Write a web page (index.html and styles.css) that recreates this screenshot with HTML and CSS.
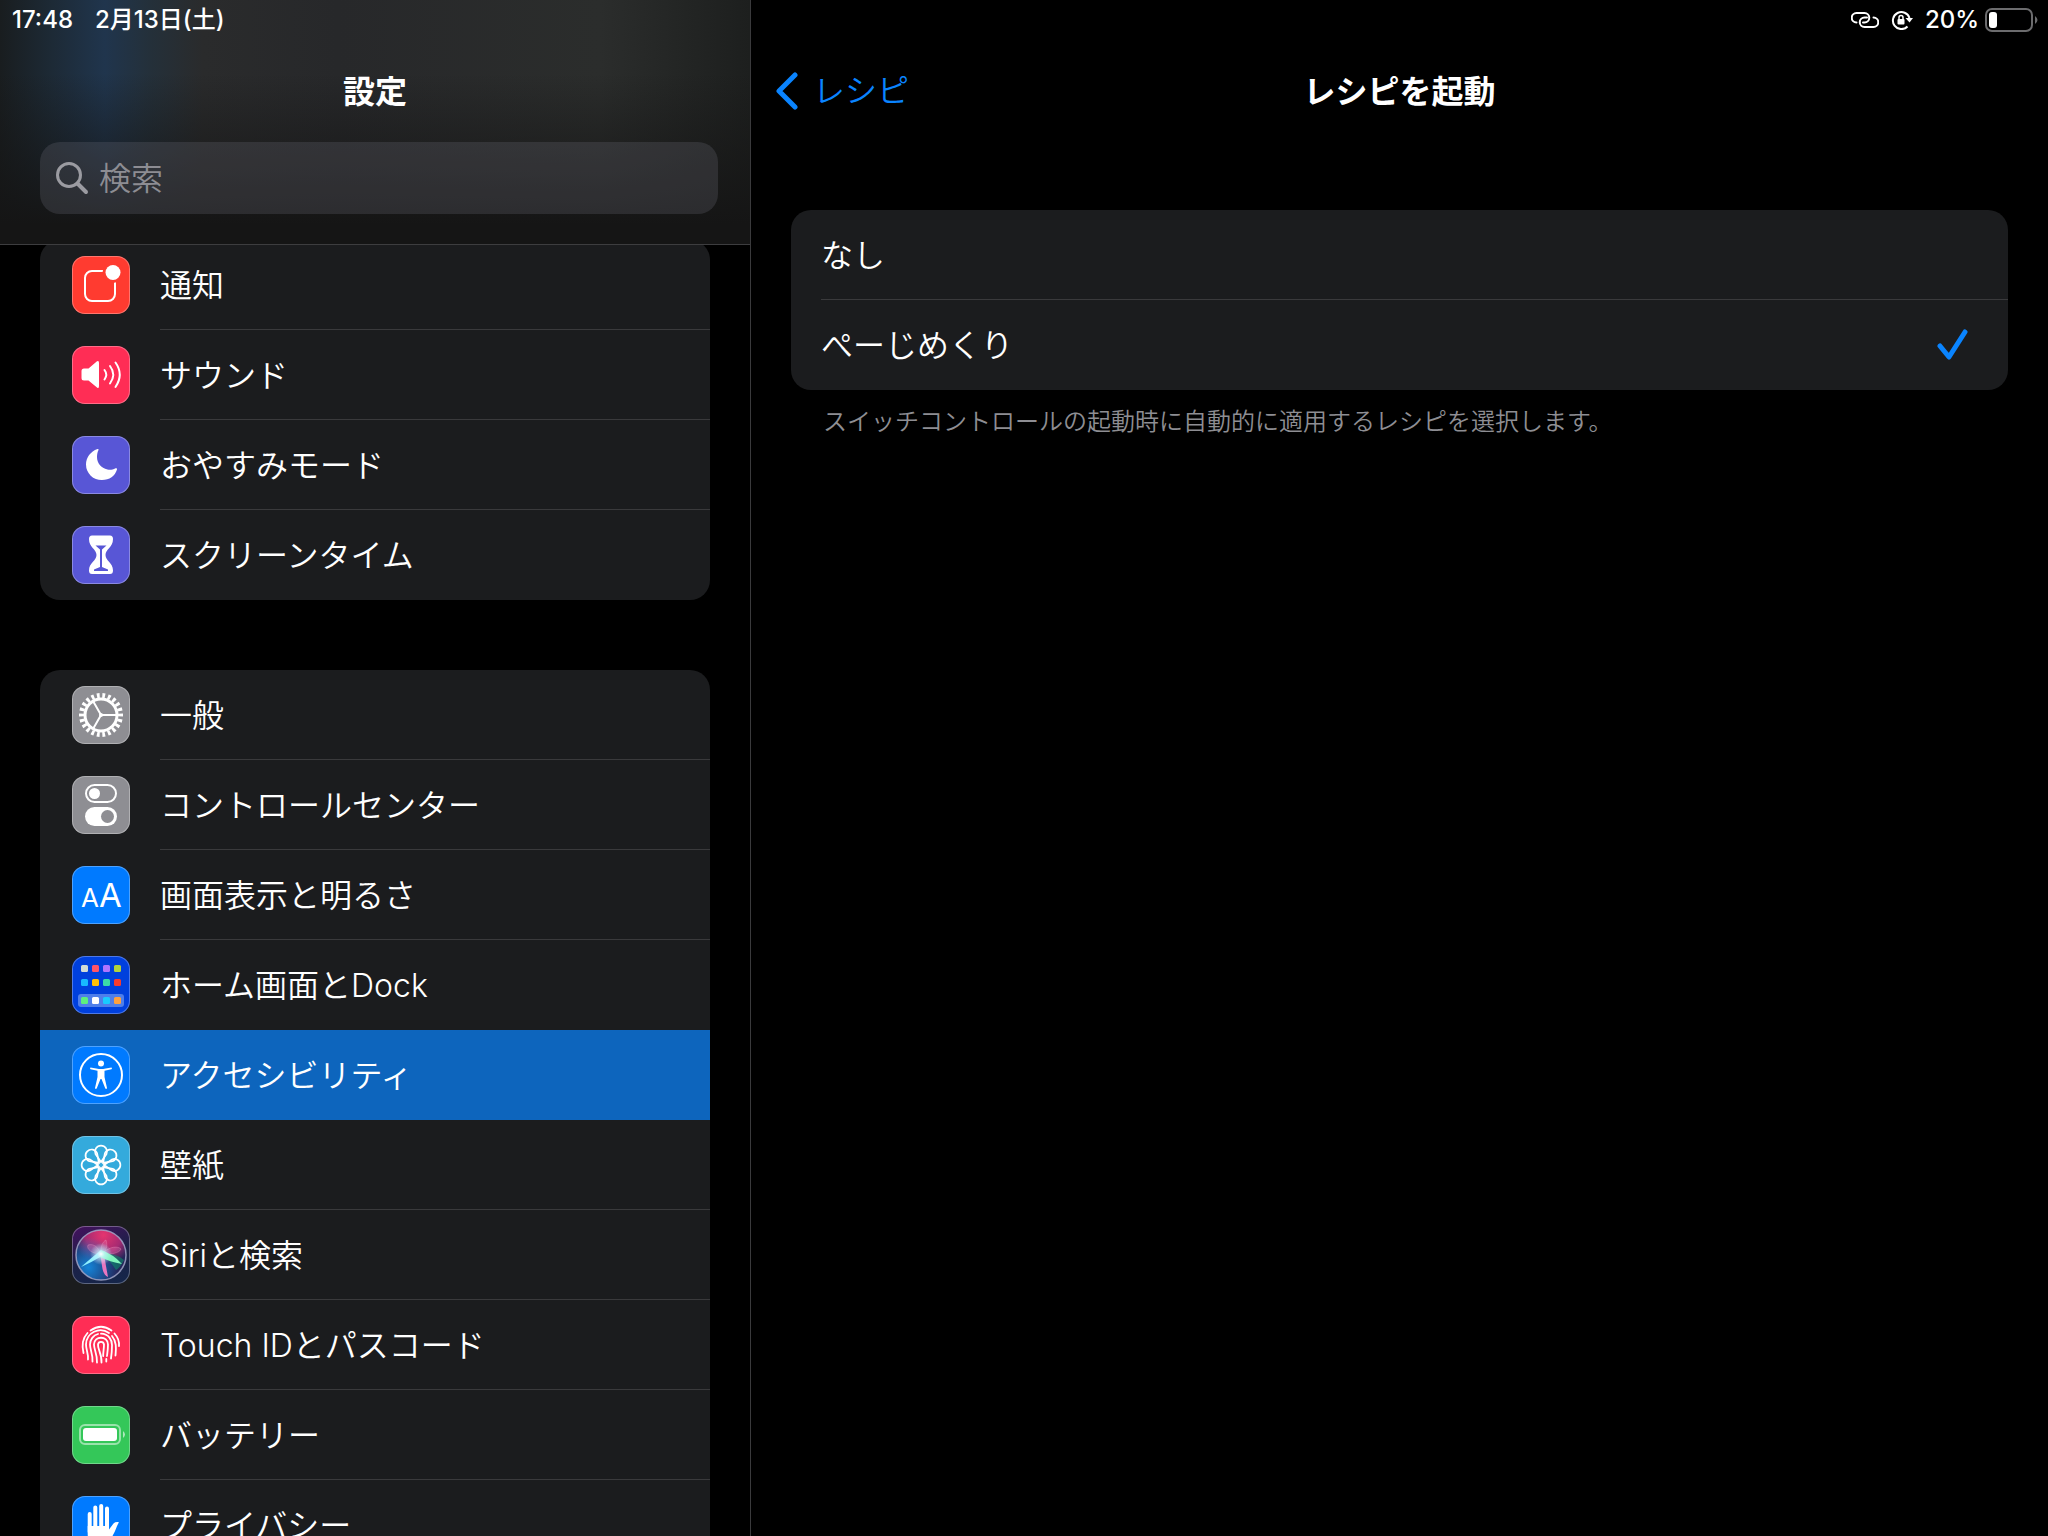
FILE: index.html
```html
<!DOCTYPE html>
<html lang="ja">

<head>
  <meta charset="UTF-8">
  <meta name="viewport" content="width=device-width, initial-scale=1.0">
  <title>設定</title>
  <link rel="stylesheet" href="styles.css">
</head>

<body>
  <div class="app">
    <aside class="sidebar">
      <header class="sidebar-header">
        <div class="status">
          <span>17:48</span>
          <span>2月13日(土)</span>
        </div>
        <h1 class="title">設定</h1>
        <label class="search">
          <svg width="34" height="34" viewBox="0 0 34 34" fill="none" stroke="#9b9ba1" stroke-width="3" stroke-linecap="round" aria-hidden="true">
            <circle cx="14" cy="14" r="11.5" />
            <path d="M22.5 22.5L31 31" stroke-width="4" />
          </svg>
          <input type="search" placeholder="検索" aria-label="検索">
        </label>
      </header>

      <nav class="menu">
        <ul class="group">
          <li><a class="item" href="#">
            <svg class="icon red" viewBox="0 0 58 58" aria-hidden="true">
              <rect x="13" y="15" width="30" height="30" rx="7" fill="none" stroke="#fff" stroke-width="2" />
              <circle cx="41" cy="16.500" r="10.500" fill="#ff3b30" />
              <circle cx="41" cy="16.500" r="7.500" fill="#fff" />
            </svg>
            <span class="label">通知</span>
          </a></li>
          <li><a class="item" href="#">
            <svg class="icon pink" viewBox="0 0 58 58" aria-hidden="true">
              <path d="M12 22.500H16.500L25 15.300Q27 14.200 27 17V40Q27 43 25 41.500L16.500 34.500H12Q9.500 34.500 9.500 32V25Q9.500 22.500 12 22.500Z" fill="#fff" />
              <g fill="none" stroke="#fff" stroke-width="2" stroke-linecap="round">
                <path d="M32.500 24Q36 28.500 32.500 33.500" />
                <path d="M38 20Q44.500 28.500 38 37.500" />
                <path d="M43.500 16.500Q52 28.500 43.500 41" />
              </g>
            </svg>
            <span class="label">サウンド</span>
          </a></li>
          <li><a class="item" href="#">
            <svg class="icon purple" viewBox="0 0 58 58" aria-hidden="true">
              <path d="M25.500 13C18.500 15.500 14 21.500 14 28.500A15.500 15.500 0 0 0 30 44C37.500 44 43 40 45 33.500C45.200 32.300 44.300 31.900 43.500 32.300C40.500 34 37.500 34 35.500 33.500C29 32 25 27 25 21C25 18 25.500 16 26.500 14Q26.800 12.500 25.500 13Z" fill="#fff" />
            </svg>
            <span class="label">おやすみモード</span>
          </a></li>
          <li><a class="item" href="#">
            <svg class="icon purple" viewBox="0 0 58 58" aria-hidden="true">
              <path d="M20 9.500H38Q41 9.500 41 13C41 21.500 33.500 23 33.500 29C33.500 35 41 36.500 41 44.500Q41 48 38 48H20Q17 48 17 44.500C17 36.500 24.500 35 24.500 29C24.500 23 17 21.500 17 13Q17 9.500 20 9.500Z" fill="#fff" />
              <path d="M23.500 19.500H34.500L30 23.500V41L36 43.500V45H22V43.500L28 41V23.500Z" fill="#5856d6" />
            </svg>
            <span class="label">スクリーンタイム</span>
          </a></li>
        </ul>

        <ul class="group">
          <li><a class="item" href="#">
            <svg class="icon gray" viewBox="0 0 58 58" aria-hidden="true">
              <g fill="none" stroke="#fff">
                <circle cx="29" cy="29" r="19.500" stroke-width="5" pathLength="44" stroke-dasharray="1 1" stroke-dashoffset="0.500" />
                <circle cx="29" cy="29" r="16" stroke-width="3" />
                <path d="M29 29H45M29 29L21 15M29 29L21 43" stroke-width="2" />
              </g>
              <circle cx="29" cy="29" r="2" fill="#fff" />
            </svg>
            <span class="label">一般</span>
          </a></li>
          <li><a class="item" href="#">
            <svg class="icon gray" viewBox="0 0 58 58" aria-hidden="true">
              <rect x="14" y="9" width="30" height="17" rx="8.500" fill="none" stroke="#fff" stroke-width="2" />
              <circle cx="22.500" cy="17.500" r="5.500" fill="#fff" />
              <rect x="13" y="31" width="32" height="19" rx="9.500" fill="#fff" />
              <circle cx="35.500" cy="40.500" r="6.500" fill="#8e8e93" />
            </svg>
            <span class="label">コントロールセンター</span>
          </a></li>
          <li><a class="item" href="#">
            <svg class="icon blue" viewBox="0 0 58 58" aria-hidden="true">
              <text class="letters" x="9" y="41" font-size="26">A</text>
              <text class="letters" x="27" y="41" font-size="33">A</text>
            </svg>
            <span class="label">画面表示と明るさ</span>
          </a></li>
          <li><a class="item" href="#">
            <svg class="icon navy" viewBox="0 0 58 58" aria-hidden="true">
              <rect x="6" y="38" width="46" height="13" rx="3" fill="#4f7fea" />
              <rect x="9" y="9" width="7" height="7" rx="1.500" fill="#d2dbd5" />
              <rect x="20" y="9" width="7" height="7" rx="1.500" fill="#ff5468" />
              <rect x="31" y="9" width="7" height="7" rx="1.500" fill="#b074ff" />
              <rect x="42" y="9" width="7" height="7" rx="1.500" fill="#b1d33c" />
              <rect x="9" y="23" width="7" height="7" rx="1.500" fill="#18b8ff" />
              <rect x="20" y="23" width="7" height="7" rx="1.500" fill="#ffc008" />
              <rect x="31" y="23" width="7" height="7" rx="1.500" fill="#3bdca8" />
              <rect x="42" y="23" width="7" height="7" rx="1.500" fill="#f83b2d" />
              <rect x="9" y="41" width="7" height="7" rx="1.500" fill="#5df07c" />
              <rect x="20" y="41" width="7" height="7" rx="1.500" fill="#fff" />
              <rect x="31" y="41" width="7" height="7" rx="1.500" fill="#19cbff" />
              <rect x="42" y="41" width="7" height="7" rx="1.500" fill="#ffa13f" />
            </svg>
            <span class="label">ホーム画面とDock</span>
          </a></li>
          <li><a class="item selected" href="#" aria-current="page">
            <svg class="icon blue" viewBox="0 0 58 58" aria-hidden="true">
              <circle cx="29" cy="29" r="21" fill="none" stroke="#fff" stroke-width="2" />
              <circle cx="29" cy="17.500" r="3" fill="#fff" />
              <path d="M18.500 21.500L27 23H31L39.500 21.500Q40.500 22.500 39.500 23.200L32.500 24.800V31L35 42Q34.500 43.500 33.300 42.500L29.500 33H28.500L24.700 42.500Q23.500 43.500 23 42L25.500 31V24.800L18.500 23.200Q17.500 22.500 18.500 21.500Z" fill="#fff" />
            </svg>
            <span class="label">アクセシビリティ</span>
          </a></li>
          <li><a class="item" href="#">
            <svg class="icon cyan" viewBox="0 0 58 58" aria-hidden="true">
              <defs>
                <path id="petal" d="M29 26L23.500 18A6 6 0 1 1 34.500 18Z" />
              </defs>
              <g fill="none" stroke="#fff" stroke-width="1.700">
                <use href="#petal" />
                <use href="#petal" transform="rotate(45 29 29)" />
                <use href="#petal" transform="rotate(90 29 29)" />
                <use href="#petal" transform="rotate(135 29 29)" />
                <use href="#petal" transform="rotate(180 29 29)" />
                <use href="#petal" transform="rotate(225 29 29)" />
                <use href="#petal" transform="rotate(270 29 29)" />
                <use href="#petal" transform="rotate(315 29 29)" />
                <circle cx="29" cy="29" r="3.500" />
              </g>
            </svg>
            <span class="label">壁紙</span>
          </a></li>
          <li><a class="item" href="#">
            <svg class="icon siri" viewBox="0 0 58 58" aria-hidden="true">
              <defs>
                <radialGradient id="orb-top" cx="0.550" cy="0.100" r="0.600">
                  <stop offset="0" stop-color="#e5356f" />
                  <stop offset="0.600" stop-color="#a52a72" />
                  <stop offset="1" stop-color="#a52a72" stop-opacity="0" />
                </radialGradient>
                <radialGradient id="orb-left" cx="0.250" cy="0.750" r="0.600">
                  <stop offset="0" stop-color="#1484d8" />
                  <stop offset="1" stop-color="#1484d8" stop-opacity="0" />
                </radialGradient>
                <radialGradient id="orb-glow">
                  <stop offset="0" stop-color="#fff" />
                  <stop offset="0.350" stop-color="#c9f4ff" stop-opacity="0.700" />
                  <stop offset="1" stop-color="#c9f4ff" stop-opacity="0" />
                </radialGradient>
              </defs>
              <circle cx="29" cy="29" r="25" fill="#24265a" />
              <circle cx="29" cy="29" r="25" fill="url(#orb-top)" />
              <circle cx="29" cy="29" r="25" fill="url(#orb-left)" />
              <path d="M30 27Q44 27 52 34Q48 42 44 44Q38 34 30 30Z" fill="#0c8a6c" fill-opacity="0.600" />
              <path d="M29 28C20 28 14 23 16 19C22 17 27 22 29 28C28 21 31 15 34 14C36 20 34 25 31 27C38 20 46 20 49 23C48 27 38 29 29 28Z" fill="#f58dc0" fill-opacity="0.250" stroke="#f3a0c8" stroke-opacity="0.300" />
              <path d="M28 26L32 28L34 40L36 51Q31 49 30 40Z" fill="#e777c0" />
              <path d="M29 24Q18 33 9 41Q20 36 30 30Z" fill="#8ff0ff" />
              <path d="M29 24Q41 28 50 38Q38 36 28 31Z" fill="#7ff5bd" />
              <circle cx="29" cy="28" r="11" fill="url(#orb-glow)" />
              <circle cx="29" cy="29" r="25" fill="none" stroke="#a9adce" stroke-width="1.500" stroke-opacity="0.800" />
            </svg>
            <span class="label">Siriと検索</span>
          </a></li>
          <li><a class="item" href="#">
            <svg class="icon pink" viewBox="0 0 58 58" aria-hidden="true">
              <g fill="none" stroke="#fff" stroke-width="1.800" stroke-linecap="round">
                <path d="M18.500 14.500Q29 7 39.500 14.500" />
                <path d="M15.500 17Q8.500 24.500 11.500 37" />
                <path d="M42.500 17.500Q47.500 23 47 30" />
                <path d="M16 43.500C16.500 37 14 34 14 28.500A14.500 14.500 0 0 1 37 17" />
                <path d="M40 20C45 26 44 33 43.500 39.500" />
                <path d="M20.500 45.500C21 38 18 34 18 28.500A11 11 0 0 1 26 18" />
                <path d="M29 17.700C37 18 40 24 40 29C40 35 39.500 39 39 42.500" />
                <path d="M25 46.500C25.500 38 22 34 22 28.500C22 19.500 36 19.500 36 28.500C36 33 35.500 36 35 40" />
                <path d="M29.500 46.500C30 38 25.500 33 26 28.500C26.500 25 31.500 25 32 28.500C32 33 31 37 31.200 40M34.300 43V45.500" />
              </g>
            </svg>
            <span class="label">Touch IDとパスコード</span>
          </a></li>
          <li><a class="item" href="#">
            <svg class="icon green" viewBox="0 0 58 58" aria-hidden="true">
              <rect x="8" y="19" width="40" height="19" rx="5" fill="none" stroke="#fff" stroke-opacity="0.500" stroke-width="2" />
              <rect x="11" y="22" width="34" height="13" rx="3" fill="#fff" />
              <path d="M51 25Q55 28.500 51 32Z" fill="#fff" fill-opacity="0.600" />
            </svg>
            <span class="label">バッテリー</span>
          </a></li>
          <li><a class="item" href="#">
            <svg class="icon blue" viewBox="0 0 58 58" aria-hidden="true">
              <g fill="none" stroke="#fff" stroke-width="4" stroke-linecap="round">
                <path d="M17.700 18V36M23.300 11.500V34M29.200 10V34M35 12.500V34" />
              </g>
              <path d="M15.700 30H37V33.500L41.500 27.500Q43.500 25.500 47 26.200C45 29 44 34 41 39C38 46 34 50 28 50C20 50 15.700 45 15.700 38Z" fill="#fff" />
            </svg>
            <span class="label">プライバシー</span>
          </a></li>
        </ul>
      </nav>
    </aside>

    <main class="detail">
      <div class="status status-right">
        <svg width="28" height="18" viewBox="0 0 28 18" fill="none" stroke="#fff" stroke-width="2" stroke-linecap="round" aria-hidden="true">
          <path d="M5.500 11.500A4.750 4.750 0 0 1 5.500 2H13.500A4.750 4.750 0 0 1 13.500 11.500H12" />
          <path d="M22.500 6.500A4.750 4.750 0 0 1 22.500 16H13.500A4.750 4.750 0 0 1 13.500 6.500H16" />
        </svg>
        <svg width="22" height="20" viewBox="0 0 22 20" fill="none" stroke="#fff" stroke-width="2" aria-hidden="true">
          <path d="M16.500 16.500A8.500 8.500 0 1 1 18.500 8" />
          <path d="M14.500 8H22L18.500 12.500Z" fill="#fff" stroke="none" />
          <rect x="6.500" y="9" width="7" height="5.500" rx="1" fill="#fff" stroke="none" />
          <path d="M8 9.500V7.500A2 2 0 0 1 12 7.500V9.500" stroke-width="1.500" />
        </svg>
        <span class="percent">20%</span>
        <svg width="54" height="24" viewBox="0 0 54 24" aria-hidden="true">
          <rect x="1" y="1" width="46" height="22" rx="6" fill="none" stroke="#6c6c6e" stroke-width="2" />
          <rect x="4" y="4" width="8" height="16" rx="3" fill="#fff" />
          <path d="M50 8Q55 12 50 16Z" fill="#6c6c6e" />
        </svg>
      </div>

      <header class="navbar">
        <a class="back" href="#">
          <svg width="24" height="38" viewBox="0 0 24 38" fill="none" stroke="#0a84ff" stroke-width="5" stroke-linecap="round" stroke-linejoin="round" aria-hidden="true">
            <path d="M20 3L4 19L20 35" />
          </svg>
          <span>レシピ</span>
        </a>
        <h2 class="title">レシピを起動</h2>
      </header>

      <form class="recipes">
        <div class="choices">
          <label class="choice">
            <input type="radio" name="recipe">
            <span class="label">なし</span>
            <svg class="check" width="32" height="32" viewBox="0 0 32 32" aria-hidden="true">
              <path d="M3 17L12 28L28 3" />
            </svg>
          </label>
          <label class="choice">
            <input type="radio" name="recipe" checked>
            <span class="label">ぺーじめくり</span>
            <svg class="check" width="32" height="32" viewBox="0 0 32 32" aria-hidden="true">
              <path d="M3 17L12 28L28 3" />
            </svg>
          </label>
        </div>
        <p class="note">スイッチコントロールの起動時に自動的に適用するレシピを選択します。</p>
      </form>
    </main>
  </div>
</body>

</html>
```

FILE: styles.css
```css
* {
  box-sizing: border-box;
}

body {
  margin: 0;
  background: #000;
  color: #fff;
  font-family: Inter, "Noto Sans CJK JP", sans-serif;
  font-size: 32px;
  line-height: 48px;
}

a {
  color: inherit;
  text-decoration: none;
}

.app {
  display: grid;
  grid-template-columns: 751fr 1297fr;
  height: 100vh;
  overflow: hidden;
}

/* sidebar */
.sidebar {
  display: flex;
  flex-direction: column;
  min-height: 0;
  border-right: 1px solid #3a3a3c;
}

.sidebar-header {
  position: relative;
  z-index: 1;
  flex: none;
  padding-bottom: 30px;
  border-bottom: 1px solid #3d3d3f;
  background:
    linear-gradient(to bottom, rgba(20, 20, 20, 0) 30%, #151515 92%),
    linear-gradient(to right, #191d1f 0%, #1d2a36 7%, #20354d 14%, #24303a 20%, #2a2b2c 27%, #27282a 45%, #2b2d2c 80%, #1d1f1e 100%);
}

.status {
  display: flex;
  align-items: center;
  gap: 22px;
  height: 40px;
  padding: 0 12px;
  font-size: 24px;
  font-weight: 500;
  line-height: 40px;
}

.title {
  margin: 0;
  padding-top: 2px;
  font-size: 32px;
  font-weight: 700;
  line-height: 100px;
  text-align: center;
}

.search {
  display: flex;
  align-items: center;
  gap: 10px;
  height: 72px;
  margin: 0 32px 0 40px;
  padding: 0 15px;
  border-radius: 20px;
  background: rgba(118, 118, 128, 0.24);
}

.search input {
  flex: 1;
  min-width: 0;
  padding: 2px 0 0;
  border: 0;
  outline: 0;
  background: none;
  color: #fff;
  font: inherit;
  font-weight: 350;
  appearance: none;
}

.search input::placeholder {
  color: #8d8d93;
  opacity: 1;
}

.menu {
  flex: 1;
  min-height: 0;
  margin-top: -5px;
  padding: 0 40px;
  overflow-y: auto;
  scrollbar-width: none;
}

.group {
  margin: 0 0 70px;
  padding: 0;
  border-radius: 20px;
  background: #1b1c1e;
  list-style: none;
  overflow: hidden;
}

.item {
  display: flex;
  align-items: center;
  gap: 30px;
  height: 90px;
  padding-left: 32px;
}

.label {
  flex: 1;
  padding-top: 2px;
  font-weight: 350;
}

.item .label {
  border-bottom: 1px solid #3a3a3c;
  line-height: 87px;
}

.group li:last-child .label,
.group li:has(+ li .selected) .label,
.item.selected .label {
  border-color: transparent;
}

.item.selected {
  background: #0d65bd;
}

.icon {
  flex: none;
  width: 58px;
  height: 58px;
  border-radius: 13px;
  box-shadow: inset 0 0 0 1px rgba(255, 255, 255, 0.3);
}

.letters {
  fill: #fff;
  font-family: Inter, sans-serif;
  font-weight: 400;
}

.red {
  background: #ff3b30;
}

.pink {
  background: #ff2d55;
}

.purple {
  background: #5856d6;
}

.gray {
  background: #8e8e93;
}

.blue {
  background: #007aff;
}

.navy {
  background: #0040dd;
}

.cyan {
  background: #34aadc;
}

.green {
  background: #34c759;
}

.siri {
  background: linear-gradient(160deg, #46105f, #1c2148 50%, #14264a);
}

/* detail */
.status-right {
  justify-content: flex-end;
  gap: 12px;
  padding: 0 9px 0 0;
}

.percent {
  margin-right: -6px;
}

.navbar {
  display: grid;
  grid-template-columns: 1fr auto 1fr;
  align-items: center;
}

.back {
  display: flex;
  align-items: center;
  gap: 14px;
  padding-left: 24px;
  color: #0a84ff;
  font-weight: 350;
}

.recipes {
  padding: 68px 40px 0;
}

.choices {
  border-radius: 20px;
  background: #1b1c1e;
}

.choice {
  display: flex;
  align-items: center;
  height: 90px;
  padding-left: 30px;
}

.choice input {
  width: 0;
  height: 0;
  margin: 0;
  appearance: none;
}

.choice .label {
  line-height: 88px;
}

.choice:not(:last-child) {
  background: linear-gradient(#3a3a3c, #3a3a3c) 30px 89px / 100% 1px no-repeat;
}

.check {
  visibility: hidden;
  margin-right: 39px;
  fill: none;
  stroke: #0a84ff;
  stroke-width: 5px;
  stroke-linecap: round;
  stroke-linejoin: round;
}

.choice input:checked ~ .check {
  visibility: visible;
}

.note {
  margin: 14px 32px 0;
  color: #8e8e93;
  font-size: 24px;
  font-weight: 350;
  line-height: 36px;
}
```
